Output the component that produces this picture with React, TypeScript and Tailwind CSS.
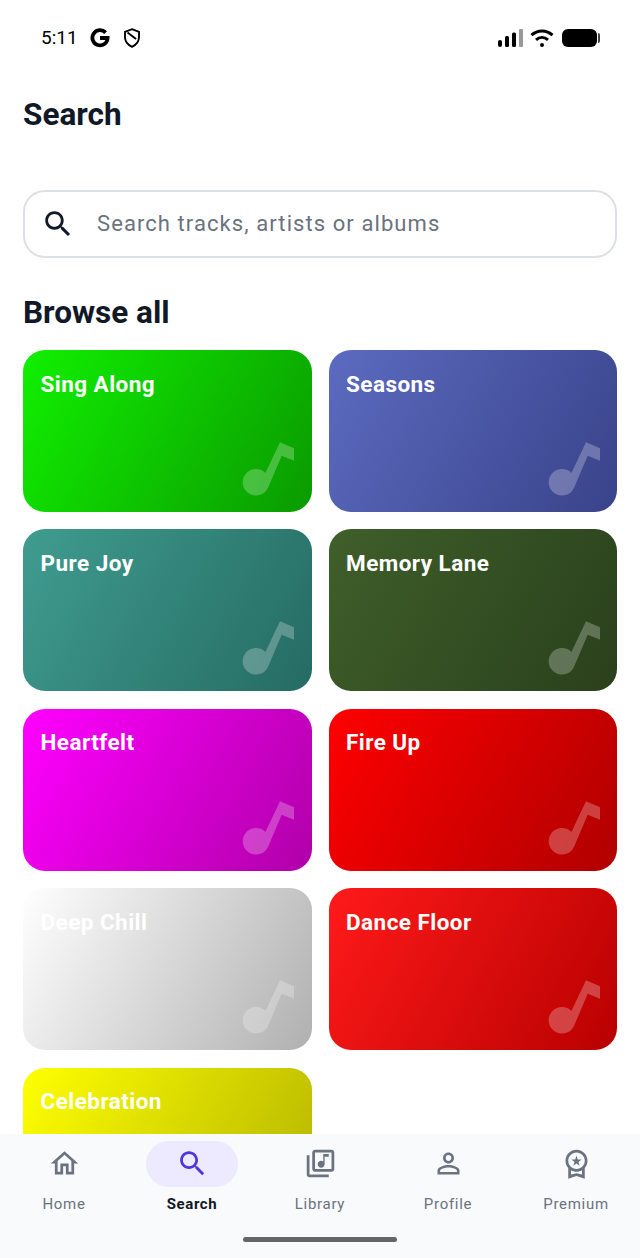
const categories = [
  { title: 'Sing Along', gradient: 'bg-[linear-gradient(119deg,#11f000,#0a9a00)]' },
  { title: 'Seasons', gradient: 'bg-[linear-gradient(119deg,#5c6bc0,#39438a)]' },
  { title: 'Pure Joy', gradient: 'bg-[linear-gradient(119deg,#409c90,#256b63)]' },
  { title: 'Memory Lane', gradient: 'bg-[linear-gradient(119deg,#3f5f2a,#2a401c)]' },
  { title: 'Heartfelt', gradient: 'bg-[linear-gradient(119deg,#ff00ff,#b000a8)]' },
  { title: 'Fire Up', gradient: 'bg-[linear-gradient(119deg,#ff0000,#b00000)]' },
  { title: 'Deep Chill', gradient: 'bg-[linear-gradient(119deg,#ffffff,#b0b0b0)]' },
  { title: 'Dance Floor', gradient: 'bg-[linear-gradient(119deg,#ff1a1a,#b80000)]' },
  { title: 'Celebration', gradient: 'bg-[linear-gradient(119deg,#ffff00,#b3b300)]' },
]

const SEARCH_PATH =
  'M15.5 14h-.79l-.28-.27C15.41 12.59 16 11.11 16 9.5 16 5.91 13.09 3 9.5 3S3 5.91 3 9.5 5.91 16 9.5 16c1.61 0 3.09-.59 4.23-1.57l.27.28v.79l5 4.99L20.49 19l-4.99-5zm-6 0C7.01 14 5 11.99 5 9.5S7.01 5 9.5 5 14 7.01 14 9.5 11.99 14 9.5 14z'

const navItems = [
  {
    label: 'Home',
    path: 'M12 5.69l5 4.5V18h-2v-6H9v6H7v-7.81l5-4.5M12 3L2 12h3v8h6v-6h2v6h6v-8h3L12 3z',
  },
  { label: 'Search', path: SEARCH_PATH, active: true },
  {
    label: 'Library',
    path: 'M20 2H8c-1.1 0-2 .9-2 2v12c0 1.1.9 2 2 2h12c1.1 0 2-.9 2-2V4c0-1.1-.9-2-2-2zm0 14H8V4h12v12zm-7.5-1c1.38 0 2.5-1.12 2.5-2.5V7h3V5h-4v5.51c-.42-.32-.93-.51-1.5-.51-1.38 0-2.5 1.12-2.5 2.5s1.12 2.5 2.5 2.5zM2 6v14c0 1.1.9 2 2 2h14v-2H4V6H2z',
  },
  {
    label: 'Profile',
    path: 'M12 5.9c1.16 0 2.1.94 2.1 2.1s-.94 2.1-2.1 2.1S9.9 9.16 9.9 8s.94-2.1 2.1-2.1m0 9c2.97 0 6.1 1.46 6.1 2.1v1.1H5.9V17c0-.64 3.13-2.1 6.1-2.1M12 4C9.79 4 8 5.79 8 8s1.79 4 4 4 4-1.79 4-4-1.79-4-4-4zm0 9c-2.67 0-8 1.34-8 4v3h16v-3c0-2.66-5.33-4-8-4z',
  },
  {
    label: 'Premium',
    path: 'M9.68 13.69L12 11.93l2.31 1.76-.88-2.85L15.75 9h-2.84L12 6.19 11.09 9H8.25l2.31 1.84-.88 2.85zM20 10c0-4.42-3.58-8-8-8s-8 3.58-8 8c0 2.03.76 3.87 2 5.28V23l6-2 6 2v-7.72c1.24-1.41 2-3.25 2-5.28zM12 4c3.31 0 6 2.69 6 6s-2.69 6-6 6-6-2.69-6-6 2.69-6 6-6zm0 15l-4 1.02v-3.1c1.18.68 2.54 1.08 4 1.08s2.82-.4 4-1.08v3.1L12 19z',
  },
]

function Icon({ path, className }: { path: string; className?: string }) {
  return (
    <svg viewBox="0 0 24 24" fill="currentColor" className={className}>
      <path d={path} />
    </svg>
  )
}

function StatusBar() {
  return (
    <div className="flex h-[75px] items-center justify-between pl-[41px] pr-[40px] text-black">
      <div className="flex items-center">
        <span className="text-[19px] leading-none">5:11</span>
        {/* Google mark */}
        <svg viewBox="0 0 20 20" className="ml-[12px] h-[20px] w-[20px]" fill="none" stroke="currentColor" strokeWidth="3.8">
          <path d="M15.6 4.6A7.6 7.6 0 1 0 17.6 10H10" />
        </svg>
        {/* shield */}
        <svg viewBox="0 0 18 20" className="ml-[13px] h-[20px] w-[18px]" fill="none" stroke="currentColor" strokeWidth="1.9">
          <path d="M9 1.2l7 2.6v5.4c0 4.2-3 7.6-7 9.6-4-2-7-5.4-7-9.6V3.8z" />
          <path d="M4.5 4.5l8.6 6.6" />
        </svg>
      </div>
      <div className="flex items-center">
        {/* signal */}
        <svg viewBox="0 0 25 18" className="h-[18px] w-[25px]">
          <rect x="0" y="11" width="4" height="7" rx="2" fill="#000" />
          <rect x="7" y="7" width="4" height="11" rx="1.5" fill="#000" />
          <rect x="14" y="3.5" width="4" height="14.5" rx="1.5" fill="#000" />
          <rect x="21" y="0" width="4" height="18" rx="1" fill="#999" />
        </svg>
        {/* wifi */}
        <svg viewBox="0 0 24 18" className="ml-[7px] h-[18px] w-[24px]" fill="none" stroke="#000" strokeWidth="3">
          <path d="M1.5 6.2C7.5 .6 16.5 .6 22.5 6.2" />
          <path d="M6 10.8c3.6-3.2 8.4-3.2 12 0" />
          <circle cx="12" cy="16" r="2" fill="#000" stroke="none" />
        </svg>
        {/* battery */}
        <div className="ml-[8px] h-[18px] w-[35px] rounded-[6px] bg-black" />
        <div className="ml-[1px] h-[10px] w-[2px] rounded-r-sm bg-[#444]" />
      </div>
    </div>
  )
}

function CategoryCard({ title, gradient }: { title: string; gradient: string }) {
  return (
    <div className={`relative h-[162px] overflow-hidden rounded-[22px] p-[17.5px] ${gradient}`}>
      <h3 className="text-[22.5px] font-bold leading-[33px] tracking-[0.45px] text-white">{title}</h3>
      <svg viewBox="0 0 56 58" className="absolute bottom-[14px] right-[15.5px] h-[58px] w-[56px]" fill="#fff" fillOpacity="0.25">
        <path d="M40 2.3L54 8.3V20.7L41.7 15.7L28.3 47.3A13.3 13.3 0 1 1 25.4 32.9Z" />
      </svg>
    </div>
  )
}

export default function App() {
  return (
    <div className="flex h-[1258px] w-[640px] flex-col overflow-hidden bg-white font-['Roboto',sans-serif]">
      <div className="min-h-0 flex-1 overflow-hidden">
        <StatusBar />
        <div className="px-[23px]">
          <h1 className="mt-[19px] text-[31.5px] font-bold leading-[42px] text-[#111827]">Search</h1>
          <div className="mt-[54px] flex h-[68px] items-center rounded-[22px] border-2 border-[#dddfe6] pl-[16px]">
            <Icon path={SEARCH_PATH} className="h-[34px] w-[34px] text-[#111827]" />
            <input
              readOnly
              placeholder="Search tracks, artists or albums"
              className="ml-[22px] flex-1 bg-transparent pb-[1px] text-[22px] tracking-[1.08px] outline-none placeholder:text-[#6b7280]"
            />
          </div>
          <h2 className="mt-[34px] text-[31.5px] font-bold leading-[42px] text-[#111827]">Browse all</h2>
          <div className="mt-[16px] grid grid-cols-2 gap-x-[17px] gap-y-[17.45px]">
            {categories.map((c) => (
              <CategoryCard key={c.title} title={c.title} gradient={c.gradient} />
            ))}
          </div>
        </div>
      </div>

      {/* bottom nav */}
      <nav className="h-[124px] shrink-0 bg-[#f9fafb]">
        <div className="grid grid-cols-5 pt-[7px]">
          {navItems.map((item) => (
            <div key={item.label} className="flex flex-col items-center">
              <div className={`flex h-[46px] w-[92px] items-center justify-center rounded-full pb-[2px] ${item.active ? 'bg-[#ede9fe]' : ''}`}>
                <Icon path={item.path} className={`h-[33px] w-[33px] ${item.active ? 'text-[#4f35e0]' : 'text-[#6b7280]'}`} />
              </div>
              <span className={`mt-[6px] text-[15px] leading-[22px] ${item.active ? 'font-bold tracking-[0.6px] text-[#111827]' : 'font-[450] tracking-[0.7px] text-[#6b7280]'}`}>
                {item.label}
              </span>
            </div>
          ))}
        </div>
        <div className="mx-auto mt-[22px] h-[5px] w-[154px] rounded-full bg-[#666]" />
      </nav>
    </div>
  )
}
